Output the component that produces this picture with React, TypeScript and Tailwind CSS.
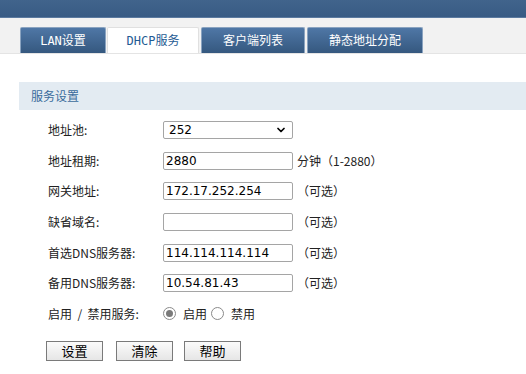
import { ChevronDown } from "lucide-react";

const cjk = { fontFamily: '"Noto Sans CJK SC", "Noto Sans", sans-serif' };
const num = { fontFamily: '"DejaVu Sans", "Noto Sans CJK SC", sans-serif' };
const tabFont = { fontFamily: '"DejaVu Sans Mono", "Liberation Mono", "Noto Sans CJK SC", monospace' };

const tabs = [
  { label: "LAN设置", w: "w-[86px]", ml: "ml-0" },
  { label: "DHCP服务", w: "w-[92px]", ml: "ml-[1px]", active: true },
  { label: "客户端列表", w: "w-[104px]", ml: "ml-[2px]" },
  { label: "静态地址分配", w: "w-[116px]", ml: "ml-[2px]" },
];

function Field({ value, suffix }: { value: string; suffix?: string }) {
  return (
    <div className="flex items-center">
      <div
        className="w-[130px] h-[18px] border border-[#a5a5a5] rounded-[2px] bg-white pl-[2px] text-[12px] leading-[16px] text-black"
        style={num}
      >
        {value}
      </div>
      {suffix && (
        <span className="ml-[4px] text-[12px] text-[#222]" style={cjk}>
          {suffix}
        </span>
      )}
    </div>
  );
}

function Row({ label, children }: { label: string; children: React.ReactNode }) {
  return (
    <div className="flex items-center h-[30.6px]">
      <div className="w-[115px] text-[12px] text-[#222] whitespace-pre" style={cjk}>
        {label}
      </div>
      {children}
    </div>
  );
}

function Radio({ checked }: { checked?: boolean }) {
  return (
    <span className="w-[13px] h-[13px] rounded-full border border-[#8a8a8a] bg-white flex items-center justify-center">
      {checked && <span className="w-[7px] h-[7px] rounded-full bg-[#7a7a7a]" />}
    </span>
  );
}

function Btn({ label, ml }: { label: string; ml: string }) {
  return (
    <button
      className={`${ml} w-[57px] h-[20px] border border-[#7a7a7a] bg-gradient-to-b from-[#fbfbfb] to-[#e6e6e6] text-[13px] leading-[18px] text-black`}
      style={cjk}
    >
      {label}
    </button>
  );
}

export default function App() {
  return (
    <div className="w-[526px] h-[374px] bg-white overflow-hidden">
      <div className="h-[18px] bg-gradient-to-b from-[#41648c] to-[#385b84] border-b border-[#5b7aa0]" />
      <div className="h-[36px] bg-[#f2f2f2] border-b border-[#e4e4e4] flex items-end pl-[20px]">
        {tabs.map((t) => (
          <div
            key={t.label}
            className={`${t.w} ${t.ml} h-[26px] flex items-center justify-center text-[12px] rounded-t-[2px] ${
              t.active
                ? "bg-white text-[#1f5b93] border-t border-x border-[#e0e0e0]"
                : "bg-gradient-to-b from-[#4f77a6] to-[#35587f] text-white border border-[#8aa3c0] border-b-0"
            }`}
            style={tabFont}
          >
            {t.label}
          </div>
        ))}
      </div>

      <div className="mt-[28px] ml-[19px] h-[28px] bg-[#e3ebf2] flex items-center pl-[12px]">
        <span className="text-[12px] text-[#3b6c9c]" style={cjk}>
          服务设置
        </span>
      </div>

      <div className="pl-[48px] pt-[5px]">
        <Row label="地址池:">
          <div className="w-[130px] h-[18px] border border-[#a5a5a5] rounded-[2px] bg-white flex items-center justify-between pl-[5px] pr-[5px]">
            <span className="text-[12px] text-black" style={num}>
              252
            </span>
            <ChevronDown className="w-[12px] h-[12px] text-black" strokeWidth={3.5} />
          </div>
        </Row>
        <Row label="地址租期:">
          <Field value="2880" suffix="分钟（1-2880）" />
        </Row>
        <Row label="网关地址:">
          <Field value="172.17.252.254" suffix="（可选）" />
        </Row>
        <Row label="缺省域名:">
          <Field value="" suffix="（可选）" />
        </Row>
        <Row label="首选DNS服务器:">
          <Field value="114.114.114.114" suffix="（可选）" />
        </Row>
        <Row label="备用DNS服务器:">
          <Field value="10.54.81.43" suffix="（可选）" />
        </Row>
        <Row label="启用  /  禁用服务:">
          <div className="flex items-center text-[12px] text-[#222]" style={cjk}>
            <Radio checked />
            <span className="ml-[7px]">启用</span>
            <span className="ml-[4px]">
              <Radio />
            </span>
            <span className="ml-[7px]">禁用</span>
          </div>
        </Row>
      </div>

      <div className="flex pl-[46px] mt-[12px]">
        <Btn label="设置" ml="ml-0" />
        <Btn label="清除" ml="ml-[13px]" />
        <Btn label="帮助" ml="ml-[11px]" />
      </div>
    </div>
  );
}
